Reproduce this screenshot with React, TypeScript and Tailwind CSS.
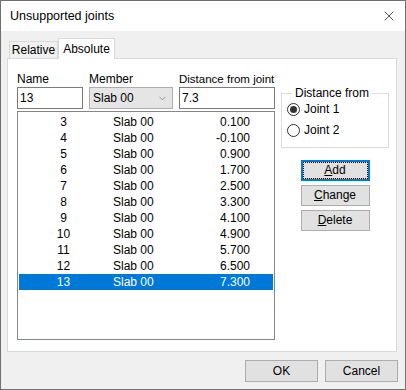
import { ChevronDown, X } from 'lucide-react';

const rows = [
  { id: 3, member: 'Slab 00', dist: '0.100' },
  { id: 4, member: 'Slab 00', dist: '-0.100' },
  { id: 5, member: 'Slab 00', dist: '0.900' },
  { id: 6, member: 'Slab 00', dist: '1.700' },
  { id: 7, member: 'Slab 00', dist: '2.500' },
  { id: 8, member: 'Slab 00', dist: '3.300' },
  { id: 9, member: 'Slab 00', dist: '4.100' },
  { id: 10, member: 'Slab 00', dist: '4.900' },
  { id: 11, member: 'Slab 00', dist: '5.700' },
  { id: 12, member: 'Slab 00', dist: '6.500' },
  { id: 13, member: 'Slab 00', dist: '7.300' },
];

function Radio({ label, checked }: { label: string; checked?: boolean }) {
  return (
    <div className="flex items-center h-[21px]">
      <span className="w-[13px] h-[13px] rounded-full border border-[#333] bg-white flex items-center justify-center">
        {checked && <span className="w-[7px] h-[7px] rounded-full bg-[#333]" />}
      </span>
      <span className="ml-[4px]">{label}</span>
    </div>
  );
}

function SideButton({ first, rest, focused }: { first: string; rest: string; focused?: boolean }) {
  if (focused) {
    return (
      <button className="w-[69px] h-[21px] border-2 border-[#0078d7] bg-[#e1e1e1] p-0">
        <div className="h-full flex items-center justify-center border border-dotted border-black">
          <span>
            <u>{first}</u>
            {rest}
          </span>
        </div>
      </button>
    );
  }
  return (
    <button className="w-[69px] h-[21px] border border-[#adadad] bg-[#e1e1e1] flex items-center justify-center">
      <span>
        <u>{first}</u>
        {rest}
      </span>
    </button>
  );
}

export default function App() {
  return (
    <div className="w-[406px] h-[390px] border border-[#6f6f6f] bg-[#f0f0f0] flex flex-col text-[12px] leading-[15px] text-black whitespace-nowrap font-['Liberation_Sans',Arial,sans-serif]">
      {/* title bar */}
      <div className="h-[30px] bg-white flex items-center justify-between pl-[9px] pr-[8px] shrink-0">
        <span className="text-[12.5px]">Unsupported joints</span>
        <X className="w-[16px] h-[16px] text-black" strokeWidth={1} />
      </div>

      <div className="pt-[7px] pl-[6px] flex flex-col">
        {/* tabs */}
        <div className="h-[20px] flex items-end pl-[2px]">
          <div className="w-[49px] h-[17px] border border-b-0 border-[#d9d9d9] bg-[#f0f0f0] flex items-center justify-center pt-[1px]">
            Relative
          </div>
          <div className="relative z-10 -mb-px w-[57px] h-[21px] border border-b-0 border-[#d9d9d9] bg-white flex items-start justify-center pt-[3px]">
            Absolute
          </div>
        </div>

        {/* panel */}
        <div className="w-[390px] h-[294px] border border-[#d9d9d9] bg-white flex pl-[9px] pr-[7px] pt-[13px]">
          <div className="w-[258px] flex flex-col">
            <div className="flex gap-[6px]">
              <div className="w-[66px] flex flex-col">
                <span>Name</span>
                <div className="h-[22px] border border-[#7a7a7a] bg-white flex items-center pl-[2px]">13</div>
              </div>
              <div className="w-[84px] flex flex-col">
                <span>Member</span>
                <div className="h-[22px] border border-[#adadad] bg-[#e5e5e5] flex items-center justify-between pl-[3px] pr-[4px]">
                  <span>Slab 00</span>
                  <ChevronDown className="w-[11px] h-[11px] text-[#505050]" strokeWidth={1.2} />
                </div>
              </div>
              <div className="w-[96px] flex flex-col">
                <span className="text-[11.5px]">Distance from joint</span>
                <div className="h-[22px] border border-[#7a7a7a] bg-white flex items-center pl-[2px]">7.3</div>
              </div>
            </div>

            <div className="mt-[2px] h-[229px] border border-[#828790] bg-white pt-[2px] px-[1px]">
              {rows.map((r) => {
                const sel = r.id === 13;
                return (
                  <div
                    key={r.id}
                    className={`h-[16px] flex items-center ${sel ? 'bg-[#0078d7] text-white' : ''}`}
                  >
                    <span className="w-[89px] text-center">{r.id}</span>
                    <span className="w-[76px] pl-[5px]">{r.member}</span>
                    <span className="w-[66px] text-right">{r.dist}</span>
                  </div>
                );
              })}
            </div>
          </div>

          <div className="ml-[6px] w-[108px] flex flex-col items-center pt-[14px]">
            <fieldset className="w-[108px] h-[62px] border border-[#dcdcdc] pl-[5px]">
              <legend className="ml-[5px] px-[3px]">Distance from</legend>
              <div className="flex flex-col mt-[-2px]">
                <Radio label="Joint 1" checked />
                <Radio label="Joint 2" />
              </div>
            </fieldset>
            <div className="mt-[12px] flex flex-col gap-[4px]">
              <SideButton first="A" rest="dd" focused />
              <SideButton first="C" rest="hange" />
              <SideButton first="D" rest="elete" />
            </div>
          </div>
        </div>
      </div>

      {/* footer */}
      <div className="mt-[8px] pr-[7px] flex justify-end gap-[7px]">
        <button className="w-[73px] h-[22px] border border-[#adadad] bg-[#e1e1e1] flex items-center justify-center">OK</button>
        <button className="w-[73px] h-[22px] border border-[#adadad] bg-[#e1e1e1] flex items-center justify-center">Cancel</button>
      </div>
    </div>
  );
}
